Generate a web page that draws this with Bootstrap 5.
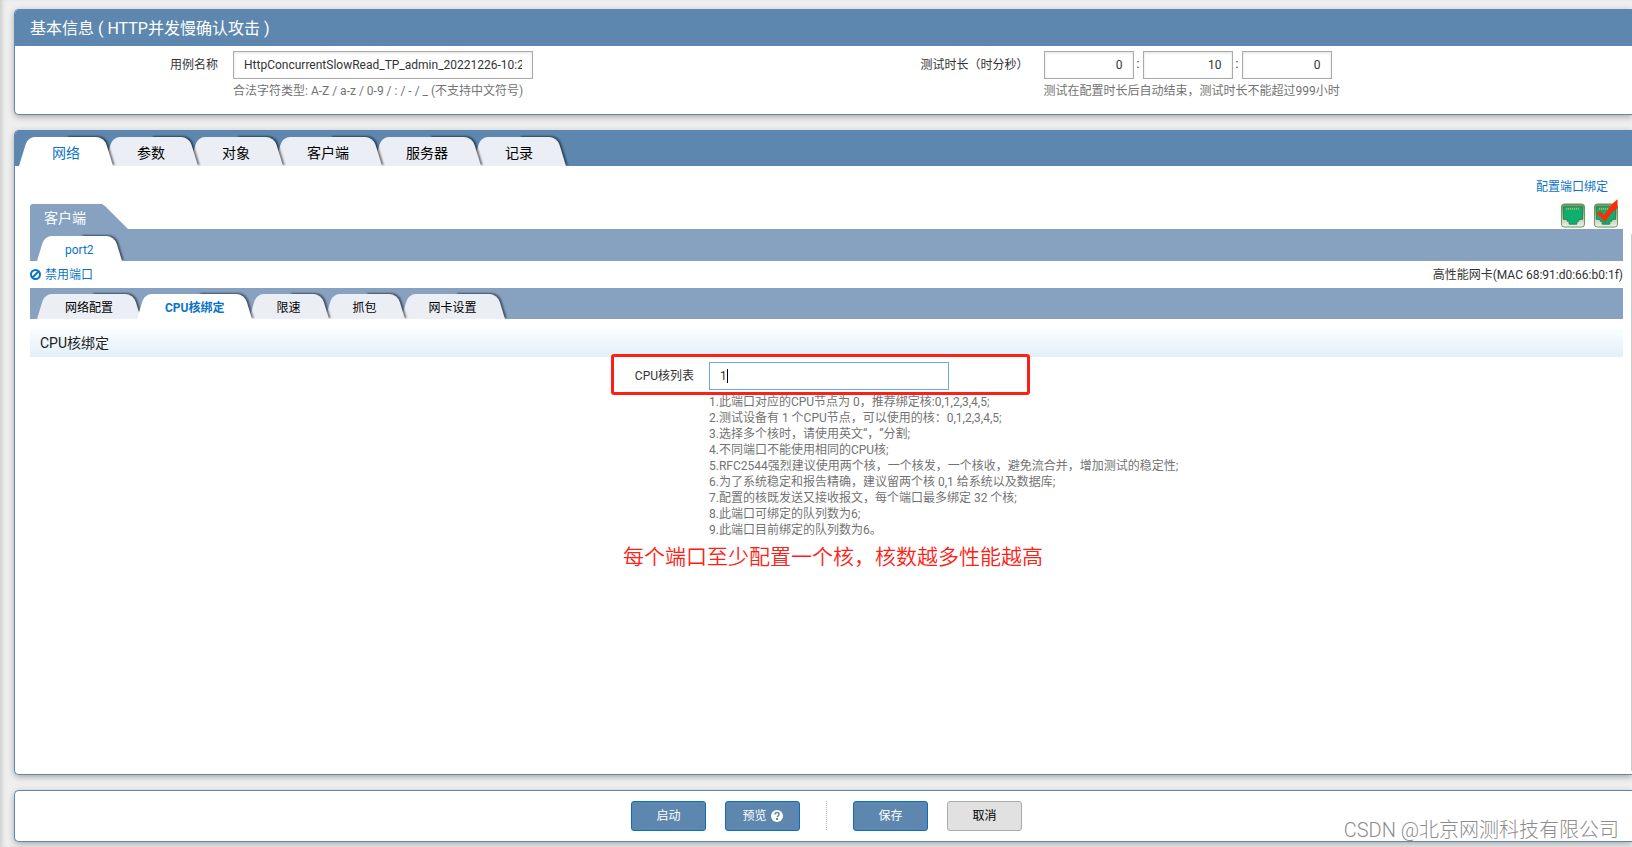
<!DOCTYPE html>
<html lang="zh-CN">
<head>
<meta charset="utf-8">
<meta name="viewport" content="width=device-width, initial-scale=1">
<title>基本信息</title>
<link href="https://cdn.jsdelivr.net/npm/bootstrap@5.3.0/dist/css/bootstrap.min.css" rel="stylesheet">
<style>
  body { font-family: Roboto, "Noto Sans CJK SC", sans-serif; font-size: 12px; line-height: 16px; color: #333; background: #efefef; min-height: 100vh; padding: 9px 0 5px 14px; gap: 15px; overflow-x: hidden; box-shadow: inset 4px 0 4px -2px #ccc; text-spacing-trim: space-all; }
  a { color: #0a74c8; text-decoration: none; }
  .panel { background: #fff; border: 1px solid #5d87af; border-right: 0; border-radius: 5px 0 0 5px; box-shadow: 0 2px 6px rgba(0,0,0,.3); }
  .panel-title { background: #5d87af; color: #fff; font-size: 16px; line-height: 35px; padding: 1px 15px 0; margin: 0; font-weight: 400; border-radius: 4px 0 0 0; }
  .basic-row { padding: 5px 0 15px; }
  .field-label { width: 218px; padding-right: 15px; text-align: right; line-height: 28px; }
  .duration-label { width: 220px; }
  .form-control { border: 1px solid #aaa; border-radius: 0; height: 28px; padding: 4px 10px; font-size: 12px; line-height: 18px; color: #333; box-shadow: inset 0 1px 3px rgba(0,0,0,.12); }
  .name-input { width: 300px; }
  .time-input { width: 90px; text-align: right; }
  .colon { width: 9px; text-align: center; line-height: 26px; }
  .hint { color: #737373; }
  .tabbar { background: #5d87af; height: 35px; padding-left: 4px; border-radius: 4px 0 0 0; }
  .bar { background: #87a2c1; }
  .tab { position: relative; isolation: isolate; color: #000; white-space: nowrap; }
  .tab:nth-child(1) { z-index: 6; }
  .tab:nth-child(2) { z-index: 5; }
  .tab:nth-child(3) { z-index: 4; }
  .tab:nth-child(4) { z-index: 3; }
  .tab:nth-child(5) { z-index: 2; }
  .tab .shape { position: absolute; inset: 0; z-index: -1; clip-path: inset(-5px -8px 0 -8px); }
  .tab .shape::before, .tab .shape::after { content: ""; position: absolute; top: 0; bottom: 0; background: #ebeef4; }
  .tab .shape::after { left: 0; right: 40%; transform: skewX(-17deg); transform-origin: 0 100%; border-top-left-radius: 7px; }
  .tab .shape::before { right: 0; left: 60%; transform: skewX(17deg); transform-origin: 100% 100%; border-top-right-radius: 8px; box-shadow: 2px -1px 2px rgba(0,0,0,.5); }
  .tab.active { color: #0a74c8; z-index: 7; }
  .tab.active .shape::before, .tab.active .shape::after { background: #fff; }
  .tab-lg { font-size: 14px; line-height: 33px; height: 29px; padding: 0 33px; margin-right: -9px; }
  .tab-sm { font-size: 12px; line-height: 29px; height: 25px; padding: 0 28px; margin-right: -4px; }
  .content { padding: 0 9px 0 15px; }
  .tool-row { padding: 13px 15px 0 0; }
  .client-tab { width: 98px; height: 25px; color: #fff; font-size: 14px; line-height: 28px; padding-left: 14px; background: #87a2c1; border-top-left-radius: 3px; clip-path: polygon(0 0, 72px 0, 75px 2px, 98px 25px, 0 25px); }
  .port-icons { gap: 7px; padding: 0 4px 1px 0; }
  .port-bar { height: 32px; padding-left: 7px; }
  .sub-bar { height: 31px; padding-left: 7px; }
  .port-info { height: 27px; }
  .section-title { margin: 10px 0 0; height: 28px; line-height: 28px; padding-left: 10px; font-size: 14px; font-weight: 400; color: #222; background: linear-gradient(#fafdff, #e2eff8); }
  .core-form { padding-left: 581px; margin-top: -3px; }
  .core-box { width: 419px; height: 41px; border: 3px solid #ff2015; border-radius: 3px; padding-top: 5px; }
  .core-box .field-label { width: 95px; }
  .core-box .form-control { width: 240px; border-color: #66aade; box-shadow: none; }
  .caret { position: absolute; left: 18px; top: 7px; width: 1px; height: 14px; background: #000; }
  .core-hints { margin: -1px 0 0 98px; padding: 0; list-style: none; }
  .note { margin: 4px 0 0 12px; color: #ff2015; font-size: 21px; line-height: 30px; font-weight: 350; }
  .scroll-line { position: absolute; right: 0; top: 103px; bottom: 3px; width: 1px; background: #ccc; }
  .footer-panel { padding: 10px 0 10px 6px; }
  .btn-pair { gap: 19px; }
  .btn-act { width: 75px; height: 30px; font-size: 12px; line-height: 16px; padding: 0; border-radius: 3px; border: 1px solid #0a6ebd; background: #5d87af; color: #fff; }
  .btn-cancel { border-color: #aaa; background: #e1e1e1; color: #000; }
  .split { height: 29px; border-left: 1px dotted #bbb; margin: 0 26px; }
  .watermark { position: absolute; right: 13px; top: 25px; font-size: 20px; line-height: 28px; color: #8c8c8c; font-weight: 300; }
</style>
</head>
<body class="d-flex flex-column">
<section class="panel">
  <h1 class="panel-title">基本信息 ( HTTP并发慢确认攻击 )</h1>
  <div class="basic-row row g-0">
    <div class="col d-flex">
      <label class="field-label flex-shrink-0" for="case-name">用例名称</label>
      <div>
        <input id="case-name" class="form-control name-input" value="HttpConcurrentSlowRead_TP_admin_20221226-10:23:45">
        <div class="hint mt-1">合法字符类型: A-Z / a-z / 0-9 / : / - / _ (不支持中文符号)</div>
      </div>
    </div>
    <div class="col d-flex">
      <label class="field-label duration-label flex-shrink-0" for="hours">测试时长（时分秒）</label>
      <div>
        <div class="d-flex">
          <input id="hours" class="form-control time-input" value="0"><span class="colon">:</span>
          <input class="form-control time-input" aria-label="分" value="10"><span class="colon">:</span>
          <input class="form-control time-input" aria-label="秒" value="0">
        </div>
        <div class="hint mt-1">测试在配置时长后自动结束，测试时长不能超过999小时</div>
      </div>
    </div>
  </div>
</section>

<main class="panel position-relative flex-grow-1">
  <nav class="tabbar d-flex align-items-end">
    <a href="#" class="tab tab-lg active"><span class="shape"></span>网络</a>
    <a href="#" class="tab tab-lg"><span class="shape"></span>参数</a>
    <a href="#" class="tab tab-lg"><span class="shape"></span>对象</a>
    <a href="#" class="tab tab-lg"><span class="shape"></span>客户端</a>
    <a href="#" class="tab tab-lg"><span class="shape"></span>服务器</a>
    <a href="#" class="tab tab-lg"><span class="shape"></span>记录</a>
  </nav>
  <div class="content">
    <div class="tool-row text-end"><a href="#">配置端口绑定</a></div>
    <div class="d-flex justify-content-between align-items-end mt-2">
      <div class="client-tab">客户端</div>
      <div class="port-icons d-flex">
        <svg width="26" height="25" viewBox="0 0 26 26"><use href="#port"/></svg>
        <svg width="26" height="25" viewBox="0 0 26 26" overflow="visible"><use href="#port"/><path d="M3 11 7 8l4 5Q17 2 25-4V5Q18 10 12 20 8 15 3 11Z" fill="#ff2a08"/></svg>
      </div>
    </div>
    <nav class="bar port-bar d-flex align-items-end">
      <a href="#" class="tab tab-sm active"><span class="shape"></span>port2</a>
    </nav>
    <div class="port-info d-flex justify-content-between align-items-center">
      <a href="#" class="d-flex align-items-center gap-1"><svg width="11" height="11" viewBox="0 0 22 22" fill="none" stroke="currentColor" stroke-width="4"><circle cx="11" cy="11" r="9"/><path d="M5 17 17 5"/></svg>禁用端口</a>
      <span>高性能网卡(MAC 68:91:d0:66:b0:1f)</span>
    </div>
    <nav class="bar sub-bar d-flex align-items-end">
      <a href="#" class="tab tab-sm"><span class="shape"></span>网络配置</a>
      <a href="#" class="tab tab-sm active fw-bold"><span class="shape"></span>CPU核绑定</a>
      <a href="#" class="tab tab-sm"><span class="shape"></span>限速</a>
      <a href="#" class="tab tab-sm"><span class="shape"></span>抓包</a>
      <a href="#" class="tab tab-sm"><span class="shape"></span>网卡设置</a>
    </nav>
    <h2 class="section-title">CPU核绑定</h2>
    <div class="core-form">
      <div class="core-box d-flex">
        <label class="field-label" for="cores">CPU核列表</label>
        <div class="position-relative">
          <input id="cores" class="form-control" value="1">
          <span class="caret"></span>
        </div>
      </div>
      <ol class="core-hints hint">
        <li>1.此端口对应的CPU节点为 0，推荐绑定核:0,1,2,3,4,5;</li>
        <li>2.测试设备有 1 个CPU节点，可以使用的核：0,1,2,3,4,5;</li>
        <li>3.选择多个核时，请使用英文“，”分割;</li>
        <li>4.不同端口不能使用相同的CPU核;</li>
        <li>5.RFC2544强烈建议使用两个核，一个核发，一个核收，避免流合并，增加测试的稳定性;</li>
        <li>6.为了系统稳定和报告精确，建议留两个核 0,1 给系统以及数据库;</li>
        <li>7.配置的核既发送又接收报文，每个端口最多绑定 32 个核;</li>
        <li>8.此端口可绑定的队列数为6;</li>
        <li>9.此端口目前绑定的队列数为6。</li>
      </ol>
      <p class="note">每个端口至少配置一个核，核数越多性能越高</p>
    </div>
  </div>
  <div class="scroll-line"></div>
</main>

<footer class="panel footer-panel position-relative d-flex justify-content-center">
  <div class="btn-pair d-flex">
    <button class="btn-act" type="button">启动</button>
    <button class="btn-act d-flex align-items-center justify-content-center gap-1" type="button">预览
      <svg width="12" height="12" viewBox="0 0 24 24"><circle cx="12" cy="12" r="12" fill="#fff"/><path d="M8 9Q8 5 12 5T16 9Q16 11 12 14" fill="none" stroke="#5d87af" stroke-width="3"/><path d="M10 16h4v4h-4z" fill="#5d87af"/></svg>
    </button>
  </div>
  <span class="split"></span>
  <div class="btn-pair d-flex">
    <button class="btn-act" type="button">保存</button>
    <button class="btn-act btn-cancel" type="button">取消</button>
  </div>
  <span class="watermark">CSDN @北京网测科技有限公司</span>
</footer>
<svg width="0" height="0" class="position-absolute"><defs>
  <linearGradient id="metal" x2="0" y2="1"><stop stop-color="#77906a"/><stop offset="1" stop-color="#f0f0ea"/></linearGradient>
  <g id="port"><rect x="1" y="1" width="24" height="24" rx="3" fill="url(#metal)" stroke="#5a9a4a"/><path d="M3 4H23V17H19V19H17V22H9V19H7V17H3Z" fill="#0bb070" stroke="#2f7d52" stroke-width="1"/><path d="M6 6H20" stroke="#c9b860" stroke-width="2" stroke-dasharray="1 1"/></g>
</defs></svg>
<script src="https://cdn.jsdelivr.net/npm/bootstrap@5.3.0/dist/js/bootstrap.bundle.min.js"></script>
</body>
</html>
